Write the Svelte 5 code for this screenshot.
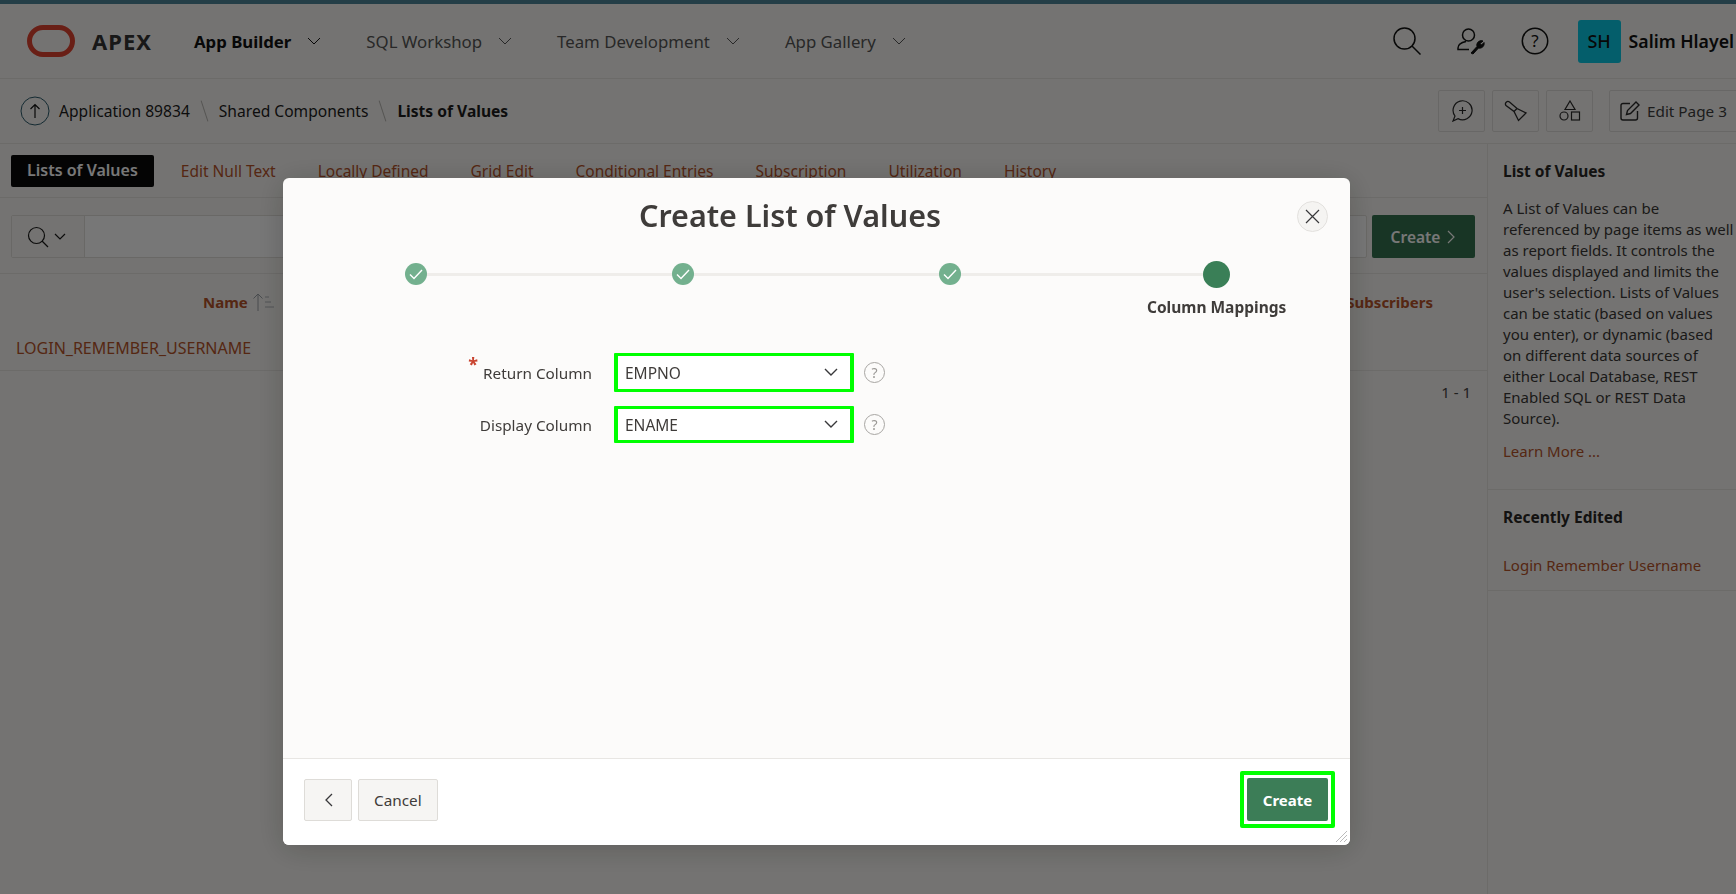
<script>
  const tabs = ['Edit Null Text', 'Locally Defined', 'Grid Edit', 'Conditional Entries', 'Subscription', 'Utilization', 'History'];
  const navItems = [
    { label: 'App Builder', active: true },
    { label: 'SQL Workshop' },
    { label: 'Team Development' },
    { label: 'App Gallery' }
  ];
  const fields = [
    { label: 'Return Column', value: 'EMPNO', required: true },
    { label: 'Display Column', value: 'ENAME' }
  ];
</script>

<div class="page">
  <header class="topbar">
    <svg class="logo" width="48" height="32" viewBox="0 0 48 32" aria-hidden="true">
      <rect x="2.500" y="2.500" width="43" height="27" rx="13.500" fill="none" stroke="#e04330" stroke-width="5" />
    </svg>
    <span class="brand">APEX</span>
    <nav class="nav">
      {#each navItems as item}
        <span class="nav-item" class:active={item.active}>
          {item.label}
          <svg width="14" height="9" viewBox="0 0 14 9" aria-hidden="true"><path d="M1 1l6 6 6-6" fill="none" stroke="currentColor" /></svg>
        </span>
      {/each}
    </nav>
    <div class="tools">
      <svg width="28" height="28" viewBox="0 0 28 28" fill="none" stroke="#111" stroke-width="1.500" aria-hidden="true"><circle cx="11.500" cy="11.500" r="10.500" /><path d="M19 19l8.500 8.500" /></svg>
      <svg width="28" height="28" viewBox="0 0 28 28" fill="none" stroke="#111" stroke-width="1.500" aria-hidden="true"><circle cx="11.500" cy="8" r="6" /><path d="M9 14.500c-5 1-8 3.500-8 6.500v1.500h11" /><path d="M14 26l6-6.500a4.500 4.500 0 0 1 6-5.500l-3 2.500 1.500 1.500 2.500-2.500a4.500 4.500 0 0 1-5.500 5.500l-5.500 6z" fill="#111" stroke-width="1" /></svg>
      <svg width="28" height="28" viewBox="0 0 28 28" fill="none" stroke="#111" stroke-width="1.500" aria-hidden="true"><circle cx="14" cy="14" r="12.700" /><text x="14" y="19.500" text-anchor="middle" class="q">?</text></svg>
    </div>
    <span class="avatar">SH</span>
    <span class="user">Salim Hlayel</span>
  </header>

  <div class="crumbs">
    <span class="up">
      <svg width="30" height="30" viewBox="0 0 30 30" fill="none" aria-hidden="true"><circle cx="15" cy="15" r="14" stroke="#2b5a6b" /><path d="M15 22V8.500M10.500 13L15 8.500l4.500 4.500" stroke="#111" stroke-width="1.200" /></svg>
    </span>
    <span class="crumb">Application 89834</span>
    <span class="sep"></span>
    <span class="crumb">Shared Components</span>
    <span class="sep"></span>
    <span class="crumb current">Lists of Values</span>
    <div class="crumb-actions">
      <span class="icon-btn">
        <svg width="22" height="22" viewBox="0 0 22 22" fill="none" stroke="#2a2a2a" stroke-width="1.200" aria-hidden="true"><path d="M2 21l2-5a9.500 9.500 0 1 1 3 2.600z" /><path d="M11.500 7v7M8 10.500h7" /></svg>
      </span>
      <span class="icon-btn">
        <svg width="24" height="22" viewBox="0 0 24 22" fill="none" stroke="#2a2a2a" stroke-width="1.300" aria-hidden="true"><path d="M2 5.500a2.500 2.500 0 0 1 3.500-3.500L13 8.500l9 4.500-7.500 7.500-4.500-9z" /><path d="M13 8.500L10 11.500" /></svg>
      </span>
      <span class="icon-btn">
        <svg width="22" height="22" viewBox="0 0 22 22" fill="none" stroke="#2a2a2a" stroke-width="1.200" aria-hidden="true"><path d="M11 1l5 8.500H6z" /><circle cx="5" cy="16" r="4" /><rect x="12.500" y="12" width="8" height="8" /></svg>
      </span>
      <span class="edit-btn">
        <svg width="20" height="20" viewBox="0 0 20 20" fill="none" stroke="#2a2a2a" stroke-width="1.400" aria-hidden="true"><path d="M10 2.500H3a2 2 0 0 0-2 2V17a2 2 0 0 0 2 2h12.500a2 2 0 0 0 2-2v-7" /><path d="M6.500 13.500l1-4L16 1l3 3-8.500 8.500z" /></svg>
        Edit Page 3
      </span>
    </div>
  </div>

  <div class="main">
    <section class="content">
      <div class="tabs">
        <span class="tab selected">Lists of Values</span>
        {#each tabs as tab}
          <span class="tab">{tab}</span>
        {/each}
      </div>
      <div class="toolbar">
        <div class="search">
          <span class="search-menu">
            <svg width="22" height="22" viewBox="0 0 22 22" fill="none" stroke="#1a1a1a" stroke-width="1.200" aria-hidden="true"><circle cx="9.500" cy="9.500" r="8" /><path d="M15 15l6 6" /></svg>
            <svg width="12" height="8" viewBox="0 0 12 8" fill="none" stroke="#1a1a1a" stroke-width="1.200" aria-hidden="true"><path d="M1 1l5 5 5-5" /></svg>
          </span>
        </div>
        <span class="btn-create">Create
          <svg width="9" height="14" viewBox="0 0 9 14" fill="none" stroke="currentColor" stroke-width="1.200" aria-hidden="true"><path d="M1 1l6 6-6 6" /></svg>
        </span>
      </div>
      <div class="table-head">
        <span class="th-name">Name
          <svg width="24" height="20" viewBox="0 0 24 20" fill="none" stroke="#9aa0a6" aria-hidden="true"><path d="M6 19V2M1.500 6.500L6 2l4.500 4.500" /><path d="M13 5h4M13 10h6M13 15h9" stroke-width=".8" /></svg>
        </span>
        <span class="th-sub">Subscribers</span>
      </div>
      <div class="row">LOGIN_REMEMBER_USERNAME</div>
      <div class="pager">1 - 1</div>
    </section>

    <aside class="side">
      <div class="side-block">
        <h4>List of Values</h4>
        <p>A List of Values can be referenced by page items as well as report fields. It controls the values displayed and limits the user's selection. Lists of Values can be static (based on values you enter), or dynamic (based<br />on different data sources of either Local Database, REST Enabled SQL or REST Data Source).</p>
        <span class="link">Learn More ...</span>
      </div>
      <div class="side-block recent">
        <h4>Recently Edited</h4>
        <span class="link">Login Remember Username</span>
      </div>
    </aside>
  </div>
</div>

<div class="overlay"></div>

<div class="dialog" role="dialog" aria-label="Create List of Values">
  <div class="dialog-body">
    <div class="title-row">
      <h1>Create List of Values</h1>
      <span class="close">
        <svg width="15" height="15" viewBox="0 0 15 15" fill="none" stroke="#38383a" stroke-width="1.200" aria-hidden="true"><path d="M1 1l13 13M14 1L1 14" /></svg>
      </span>
    </div>

    <div class="steps">
      {#each [1, 2, 3] as step}
        <div class="step">
          <span class="dot">
            <svg width="14" height="11" viewBox="0 0 14 11" fill="none" stroke="#fff" stroke-width="1.400" aria-hidden="true"><path d="M1 5.500l4 4 8-8.500" /></svg>
          </span>
        </div>
      {/each}
      <div class="step last">
        <span class="dot now"></span>
        <span class="step-label">Column Mappings</span>
      </div>
    </div>

    <div class="form">
      {#each fields as field, i}
        <div class="field">
          <label class="field-label">
            {#if field.required}<span class="req">*</span>{/if}{field.label}
          </label>
          <div class="select" class:tall={i === 0}>
            <span>{field.value}</span>
            <svg width="14" height="9" viewBox="0 0 14 9" fill="none" stroke="#38383a" stroke-width="1.400" aria-hidden="true"><path d="M1 1l6 6 6-6" /></svg>
          </div>
          <span class="help">?</span>
        </div>
      {/each}
    </div>
  </div>

  <div class="dialog-foot">
    <span class="btn back">
      <svg width="9" height="14" viewBox="0 0 9 14" fill="none" stroke="#38383a" stroke-width="1.300" aria-hidden="true"><path d="M8 1L2 7l6 6" /></svg>
    </span>
    <span class="btn">Cancel</span>
    <span class="primary-wrap"><span class="primary">Create</span></span>
  </div>
  <svg class="grip" width="11" height="11" viewBox="0 0 11 11" stroke="#bbb" aria-hidden="true"><path d="M0 11L11 0M4 11l7-7M8 11l3-3" /></svg>
</div>

<style>
  :global(body) {
    margin: 0;
    overflow: hidden;
    font-family: "Noto Sans", "Open Sans", sans-serif;
    color: #2a2826;
  }

  .page {
    width: 1736px;
    height: 894px;
    overflow: hidden;
    background: #f7f5f2;
    border-top: 4px solid #4e8498;
    box-sizing: border-box;
    display: flex;
    flex-direction: column;
  }

  .topbar {
    height: 75px;
    flex: none;
    box-sizing: border-box;
    border-bottom: 1px solid #e6e4e0;
    display: flex;
    align-items: center;
    padding-left: 27px;
  }

  .brand {
    margin-left: 17px;
    font-weight: 700;
    font-size: 22px;
    letter-spacing: 1px;
    color: #333;
  }

  .nav {
    display: flex;
    margin-left: 42px;
    gap: 45px;
  }

  .nav-item {
    font-size: 16.800px;
    color: #555;
    display: flex;
    align-items: center;
    gap: 16px;
    white-space: nowrap;
  }

  .nav-item.active {
    color: #111;
    font-weight: 700;
  }

  .tools {
    margin-left: auto;
    display: flex;
    gap: 36px;
  }

  .avatar {
    margin-left: 29px;
    width: 43px;
    height: 43px;
    border-radius: 3px;
    background: #09c8e4;
    display: flex;
    align-items: center;
    justify-content: center;
    font-size: 18px;
    font-weight: 500;
    color: #111;
  }

  .user {
    margin-left: 8px;
    margin-right: 2px;
    font-size: 17.700px;
    font-weight: 600;
    color: #111;
    white-space: nowrap;
  }

  .q {
    font-size: 17px;
    fill: #111;
    stroke: none;
  }

  .crumbs {
    height: 65px;
    flex: none;
    box-sizing: border-box;
    border-bottom: 1px solid #e6e4e0;
    display: flex;
    align-items: center;
    padding-left: 20px;
    font-size: 15.600px;
    color: #1c1c1c;
  }

  .up {
    display: flex;
    margin-right: 9px;
  }

  .sep {
    width: 1px;
    height: 22px;
    margin: 0 14px;
    background: #b5b3b0;
    transform: rotate(-18deg);
  }

  .crumb.current {
    font-weight: 700;
  }

  .crumb-actions {
    margin-left: auto;
    display: flex;
    gap: 7px;
    margin-right: -16px;
  }

  .icon-btn {
    width: 47px;
    height: 42px;
    box-sizing: border-box;
    border: 1px solid #dedcd8;
    border-radius: 2px;
    display: flex;
    align-items: center;
    justify-content: center;
  }

  .edit-btn {
    margin-left: 9px;
    width: 143px;
    height: 42px;
    box-sizing: border-box;
    border: 1px solid #dedcd8;
    border-radius: 2px;
    display: flex;
    align-items: center;
    gap: 7px;
    padding-left: 10px;
    font-size: 15.300px;
    color: #3d3d3d;
  }

  .main {
    flex: 1;
    display: grid;
    grid-template-columns: 1487px 1fr;
    min-height: 0;
  }

  .tabs {
    height: 54px;
    box-sizing: border-box;
    border-bottom: 1px solid #e6e4e0;
    display: flex;
    align-items: center;
    padding-left: 11px;
    gap: 42px;
  }

  .tab {
    font-size: 15.500px;
    color: #b5532a;
    white-space: nowrap;
  }

  .tab.selected {
    background: #0a0a0a;
    color: #fff;
    font-weight: 600;
    font-size: 16px;
    padding: 4px 16px;
    border-radius: 2px;
    height: 32px;
    box-sizing: border-box;
    margin-right: -15px;
  }

  .toolbar {
    height: 76px;
    box-sizing: border-box;
    border-bottom: 1px solid #e6e4e0;
    display: flex;
    align-items: flex-start;
    padding: 17px 12px 0 11px;
    gap: 5px;
  }

  .search {
    flex: 1;
    height: 43px;
    box-sizing: border-box;
    border: 1px solid #e0ded9;
    border-radius: 2px;
    background: #fdfdfc;
  }

  .search-menu {
    width: 73px;
    height: 100%;
    box-sizing: border-box;
    border-right: 1px solid #e0ded9;
    background: #f7f5f2;
    display: flex;
    align-items: center;
    justify-content: center;
    gap: 5px;
    padding-right: 4px;
  }

  .btn-create {
    width: 103px;
    height: 43px;
    border-radius: 2px;
    background: #34724f;
    color: #fff;
    font-size: 15.500px;
    font-weight: 600;
    display: flex;
    align-items: center;
    justify-content: center;
    gap: 7px;
  }

  .table-head {
    height: 55px;
    display: flex;
    align-items: center;
    font-size: 15px;
    font-weight: 700;
    color: #b5532a;
  }

  .th-name {
    margin-left: 203px;
    display: flex;
    align-items: center;
    gap: 4px;
  }

  .th-sub {
    margin-left: auto;
    margin-right: 54px;
  }

  .row {
    height: 42px;
    box-sizing: border-box;
    border-bottom: 1px solid #e6e4e0;
    padding-left: 16px;
    font-size: 16px;
    color: #b5532a;
    line-height: 39px;
  }

  .pager {
    text-align: right;
    padding: 11px 16px 0 0;
    font-size: 15px;
    color: #444;
  }

  .side {
    border-left: 1px solid #e6e4e0;
  }

  .side-block {
    padding: 17px 0 27px 15px;
    border-bottom: 1px solid #e6e4e0;
    font-size: 15px;
    line-height: 21px;
    color: #3a3836;
  }

  .side-block.recent {
    padding-bottom: 14px;
  }

  .side-block h4 {
    margin: 0 0 16px;
    font-size: 15.500px;
    font-weight: 700;
    color: #2a2826;
  }

  .side-block p {
    margin: 0 0 12px;
    white-space: normal;
  }

  .side-block.recent h4 {
    margin-bottom: 27px;
  }

  .link {
    color: #b5532a;
    white-space: nowrap;
  }

  .overlay {
    position: fixed;
    inset: 0;
    background: rgba(0, 0, 0, 0.53);
    z-index: 10;
  }

  .dialog {
    position: fixed;
    left: 283px;
    top: 178px;
    width: 1067px;
    height: 667px;
    z-index: 30;
    border-radius: 6px;
    overflow: hidden;
    background: #fcfbfa;
    box-shadow: 0 4px 30px rgba(0, 0, 0, 0.2);
    display: flex;
    flex-direction: column;
  }

  .dialog-body {
    flex: 1;
  }

  .title-row {
    display: flex;
    align-items: center;
    height: 74px;
    padding-right: 22px;
  }

  .title-row h1 {
    flex: 1;
    margin: 0;
    text-align: center;
    font-size: 30.500px;
    font-weight: 600;
    color: #3f3c3a;
  }

  .close {
    width: 31px;
    height: 31px;
    box-sizing: border-box;
    border: 1px solid #e3e1de;
    border-radius: 50%;
    background: #f5f4f2;
    display: flex;
    align-items: center;
    justify-content: center;
    margin-top: 3px;
  }

  .steps {
    display: flex;
    position: relative;
    margin-top: 8px;
    height: 78px;
  }

  .steps::before {
    content: "";
    position: absolute;
    left: 133px;
    right: 133px;
    top: 13px;
    height: 3px;
    background: #efedea;
  }

  .step {
    flex: 1;
    display: flex;
    flex-direction: column;
    align-items: center;
    position: relative;
    padding-top: 3px;
  }

  .dot {
    width: 22px;
    height: 22px;
    border-radius: 50%;
    background: #73b08e;
    display: flex;
    align-items: center;
    justify-content: center;
  }

  .dot.now {
    width: 27px;
    height: 27px;
    margin-top: -2px;
    background: #3a7f57;
  }

  .step-label {
    margin-top: 8px;
    font-size: 15.500px;
    font-weight: 700;
    color: #3f3c3a;
    white-space: nowrap;
  }

  .form {
    margin-top: 15px;
    display: flex;
    flex-direction: column;
    gap: 14px;
  }

  .field {
    display: flex;
    align-items: center;
  }

  .field-label {
    width: 309px;
    text-align: right;
    font-size: 15.300px;
    color: #3f3c3a;
  }

  .req {
    color: #c9432f;
    font-size: 18px;
    font-weight: 700;
    position: relative;
    top: -8px;
    margin-right: 5px;
    line-height: 0;
  }

  .select {
    margin-left: 22px;
    width: 240px;
    height: 37px;
    box-sizing: border-box;
    border: solid #00ff00;
    border-width: 3px 4px;
    border-radius: 1px;
    background: #fff;
    display: flex;
    align-items: center;
    justify-content: space-between;
    padding: 0 12px 0 7px;
    font-size: 15.500px;
    color: #3f3c3a;
  }

  .select.tall {
    height: 39px;
  }

  .help {
    margin-left: 10px;
    width: 21px;
    height: 21px;
    box-sizing: border-box;
    border: 1px solid #a8a6a3;
    border-radius: 50%;
    display: flex;
    align-items: center;
    justify-content: center;
    font-size: 14px;
    color: #9a9895;
  }

  .dialog-foot {
    flex: none;
    height: 87px;
    box-sizing: border-box;
    border-top: 1px solid #e8e6e3;
    background: #fff;
    display: flex;
    align-items: center;
    padding: 0 15px 5px 21px;
    gap: 6px;
  }

  .btn {
    height: 42px;
    padding: 0 15px;
    box-sizing: border-box;
    border: 1px solid #dedcd8;
    border-radius: 2px;
    background: #f6f5f3;
    display: flex;
    align-items: center;
    font-size: 15.300px;
    color: #3f3c3a;
  }

  .btn.back {
    width: 48px;
    justify-content: center;
    padding: 0;
  }

  .primary-wrap {
    margin-left: auto;
    border: 4px solid #00ff00;
    border-radius: 2px;
    padding: 3px;
    background: #fff;
    display: flex;
  }

  .primary {
    width: 81px;
    height: 43px;
    border-radius: 2px;
    background: #3c7d57;
    color: #fff;
    font-size: 15px;
    font-weight: 700;
    display: flex;
    align-items: center;
    justify-content: center;
  }

  .grip {
    position: absolute;
    right: 3px;
    bottom: 3px;
  }
</style>
